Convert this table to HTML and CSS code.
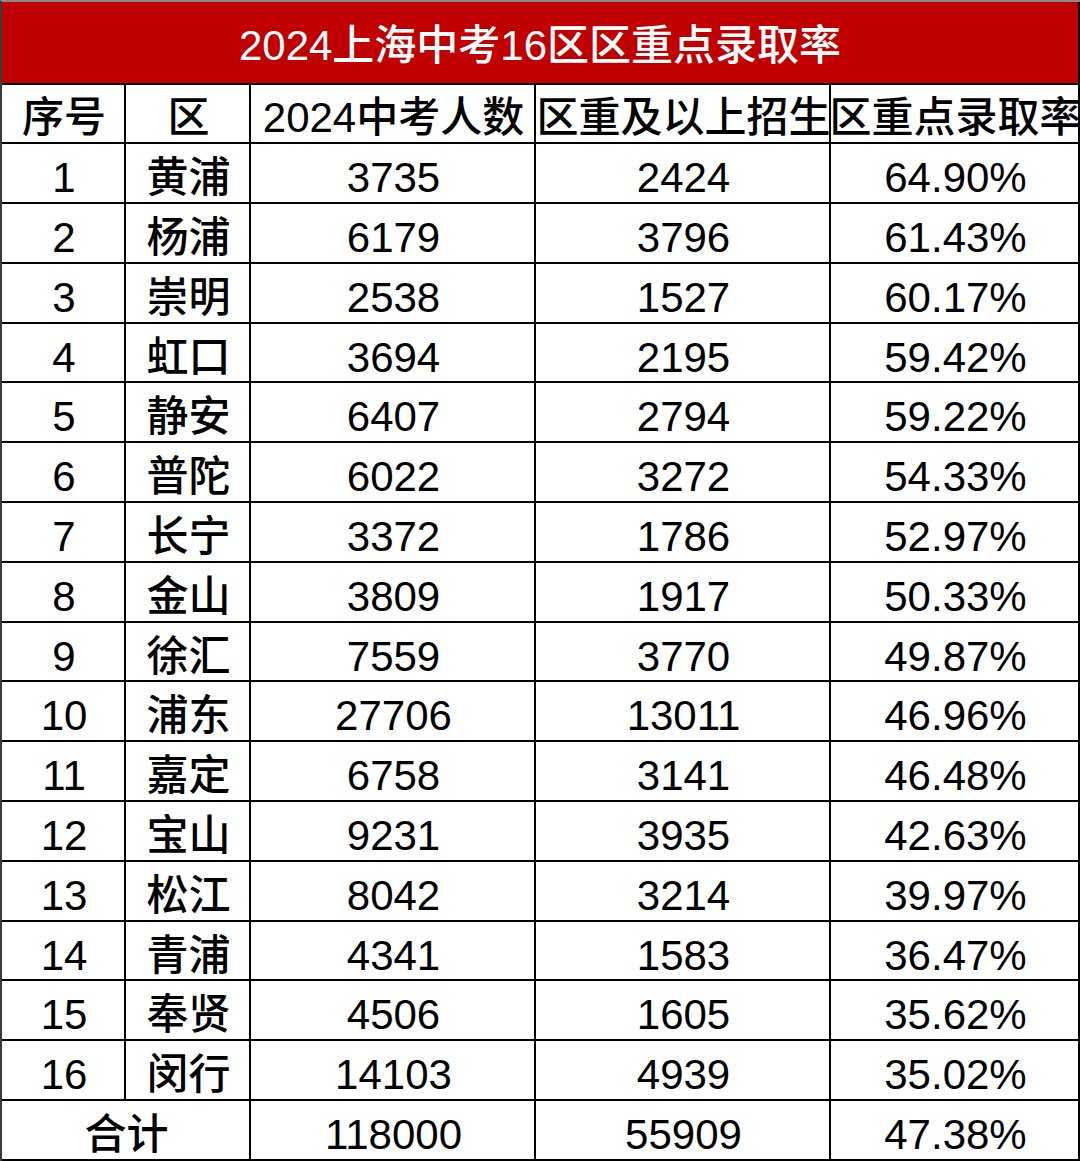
FILE: index.html
```html
<!DOCTYPE html>
<html lang="zh-CN">
<head>
<meta charset="utf-8">
<title>2024上海中考16区区重点录取率</title>
<link rel="stylesheet" href="styles.css">
</head>
<body>
<div class="sheet">
  <div class="cell title">2024上海中考16区区重点录取率</div>

  <div class="cell">序号</div>
  <div class="cell">区</div>
  <div class="cell">2024中考人数</div>
  <div class="cell">区重及以上招生</div>
  <div class="cell">区重点录取率</div>

  <div class="cell">1</div><div class="cell">黄浦</div><div class="cell">3735</div><div class="cell">2424</div><div class="cell">64.90%</div>
  <div class="cell">2</div><div class="cell">杨浦</div><div class="cell">6179</div><div class="cell">3796</div><div class="cell">61.43%</div>
  <div class="cell">3</div><div class="cell">崇明</div><div class="cell">2538</div><div class="cell">1527</div><div class="cell">60.17%</div>
  <div class="cell">4</div><div class="cell">虹口</div><div class="cell">3694</div><div class="cell">2195</div><div class="cell">59.42%</div>
  <div class="cell">5</div><div class="cell">静安</div><div class="cell">6407</div><div class="cell">2794</div><div class="cell">59.22%</div>
  <div class="cell">6</div><div class="cell">普陀</div><div class="cell">6022</div><div class="cell">3272</div><div class="cell">54.33%</div>
  <div class="cell">7</div><div class="cell">长宁</div><div class="cell">3372</div><div class="cell">1786</div><div class="cell">52.97%</div>
  <div class="cell">8</div><div class="cell">金山</div><div class="cell">3809</div><div class="cell">1917</div><div class="cell">50.33%</div>
  <div class="cell">9</div><div class="cell">徐汇</div><div class="cell">7559</div><div class="cell">3770</div><div class="cell">49.87%</div>
  <div class="cell">10</div><div class="cell">浦东</div><div class="cell">27706</div><div class="cell">13011</div><div class="cell">46.96%</div>
  <div class="cell">11</div><div class="cell">嘉定</div><div class="cell">6758</div><div class="cell">3141</div><div class="cell">46.48%</div>
  <div class="cell">12</div><div class="cell">宝山</div><div class="cell">9231</div><div class="cell">3935</div><div class="cell">42.63%</div>
  <div class="cell">13</div><div class="cell">松江</div><div class="cell">8042</div><div class="cell">3214</div><div class="cell">39.97%</div>
  <div class="cell">14</div><div class="cell">青浦</div><div class="cell">4341</div><div class="cell">1583</div><div class="cell">36.47%</div>
  <div class="cell">15</div><div class="cell">奉贤</div><div class="cell">4506</div><div class="cell">1605</div><div class="cell">35.62%</div>
  <div class="cell">16</div><div class="cell">闵行</div><div class="cell">14103</div><div class="cell">4939</div><div class="cell">35.02%</div>

  <div class="cell total-label">合计</div>
  <div class="cell">118000</div>
  <div class="cell">55909</div>
  <div class="cell">47.38%</div>
</div>
</body>
</html>
```

FILE: styles.css
```css
html, body {
  margin: 0;
  padding: 0;
  background: #ffffff;
}

.sheet {
  width: 1080px;
  height: 1161px;
  box-sizing: border-box;
  display: grid;
  grid-template-columns: 124px 125px 285px 295px 1fr;
  grid-template-rows: 82.5px repeat(18, 59.8px);
  border-left: 2px solid #3a3a3a;
  border-top: 2px solid #8a8a8a;
  overflow: hidden;
  font-family: "Liberation Sans", "Noto Sans CJK SC", sans-serif;
  font-weight: 500;
  color: #000;
}

.cell {
  box-sizing: border-box;
  border-right: 2px solid #000;
  border-bottom: 2px solid #000;
  display: flex;
  align-items: center;
  justify-content: center;
  font-size: 42px;
  line-height: 1;
  padding-top: 10px;
  padding-left: 2px;
  white-space: nowrap;
  overflow: hidden;
}

.title {
  grid-column: 1 / -1;
  background: #c00000;
  color: #ffffff;
  font-size: 42px;
  padding-top: 8px;
  padding-left: 0;
  border-bottom-width: 2px;
}

.total-label {
  grid-column: 1 / 3;
}
```
